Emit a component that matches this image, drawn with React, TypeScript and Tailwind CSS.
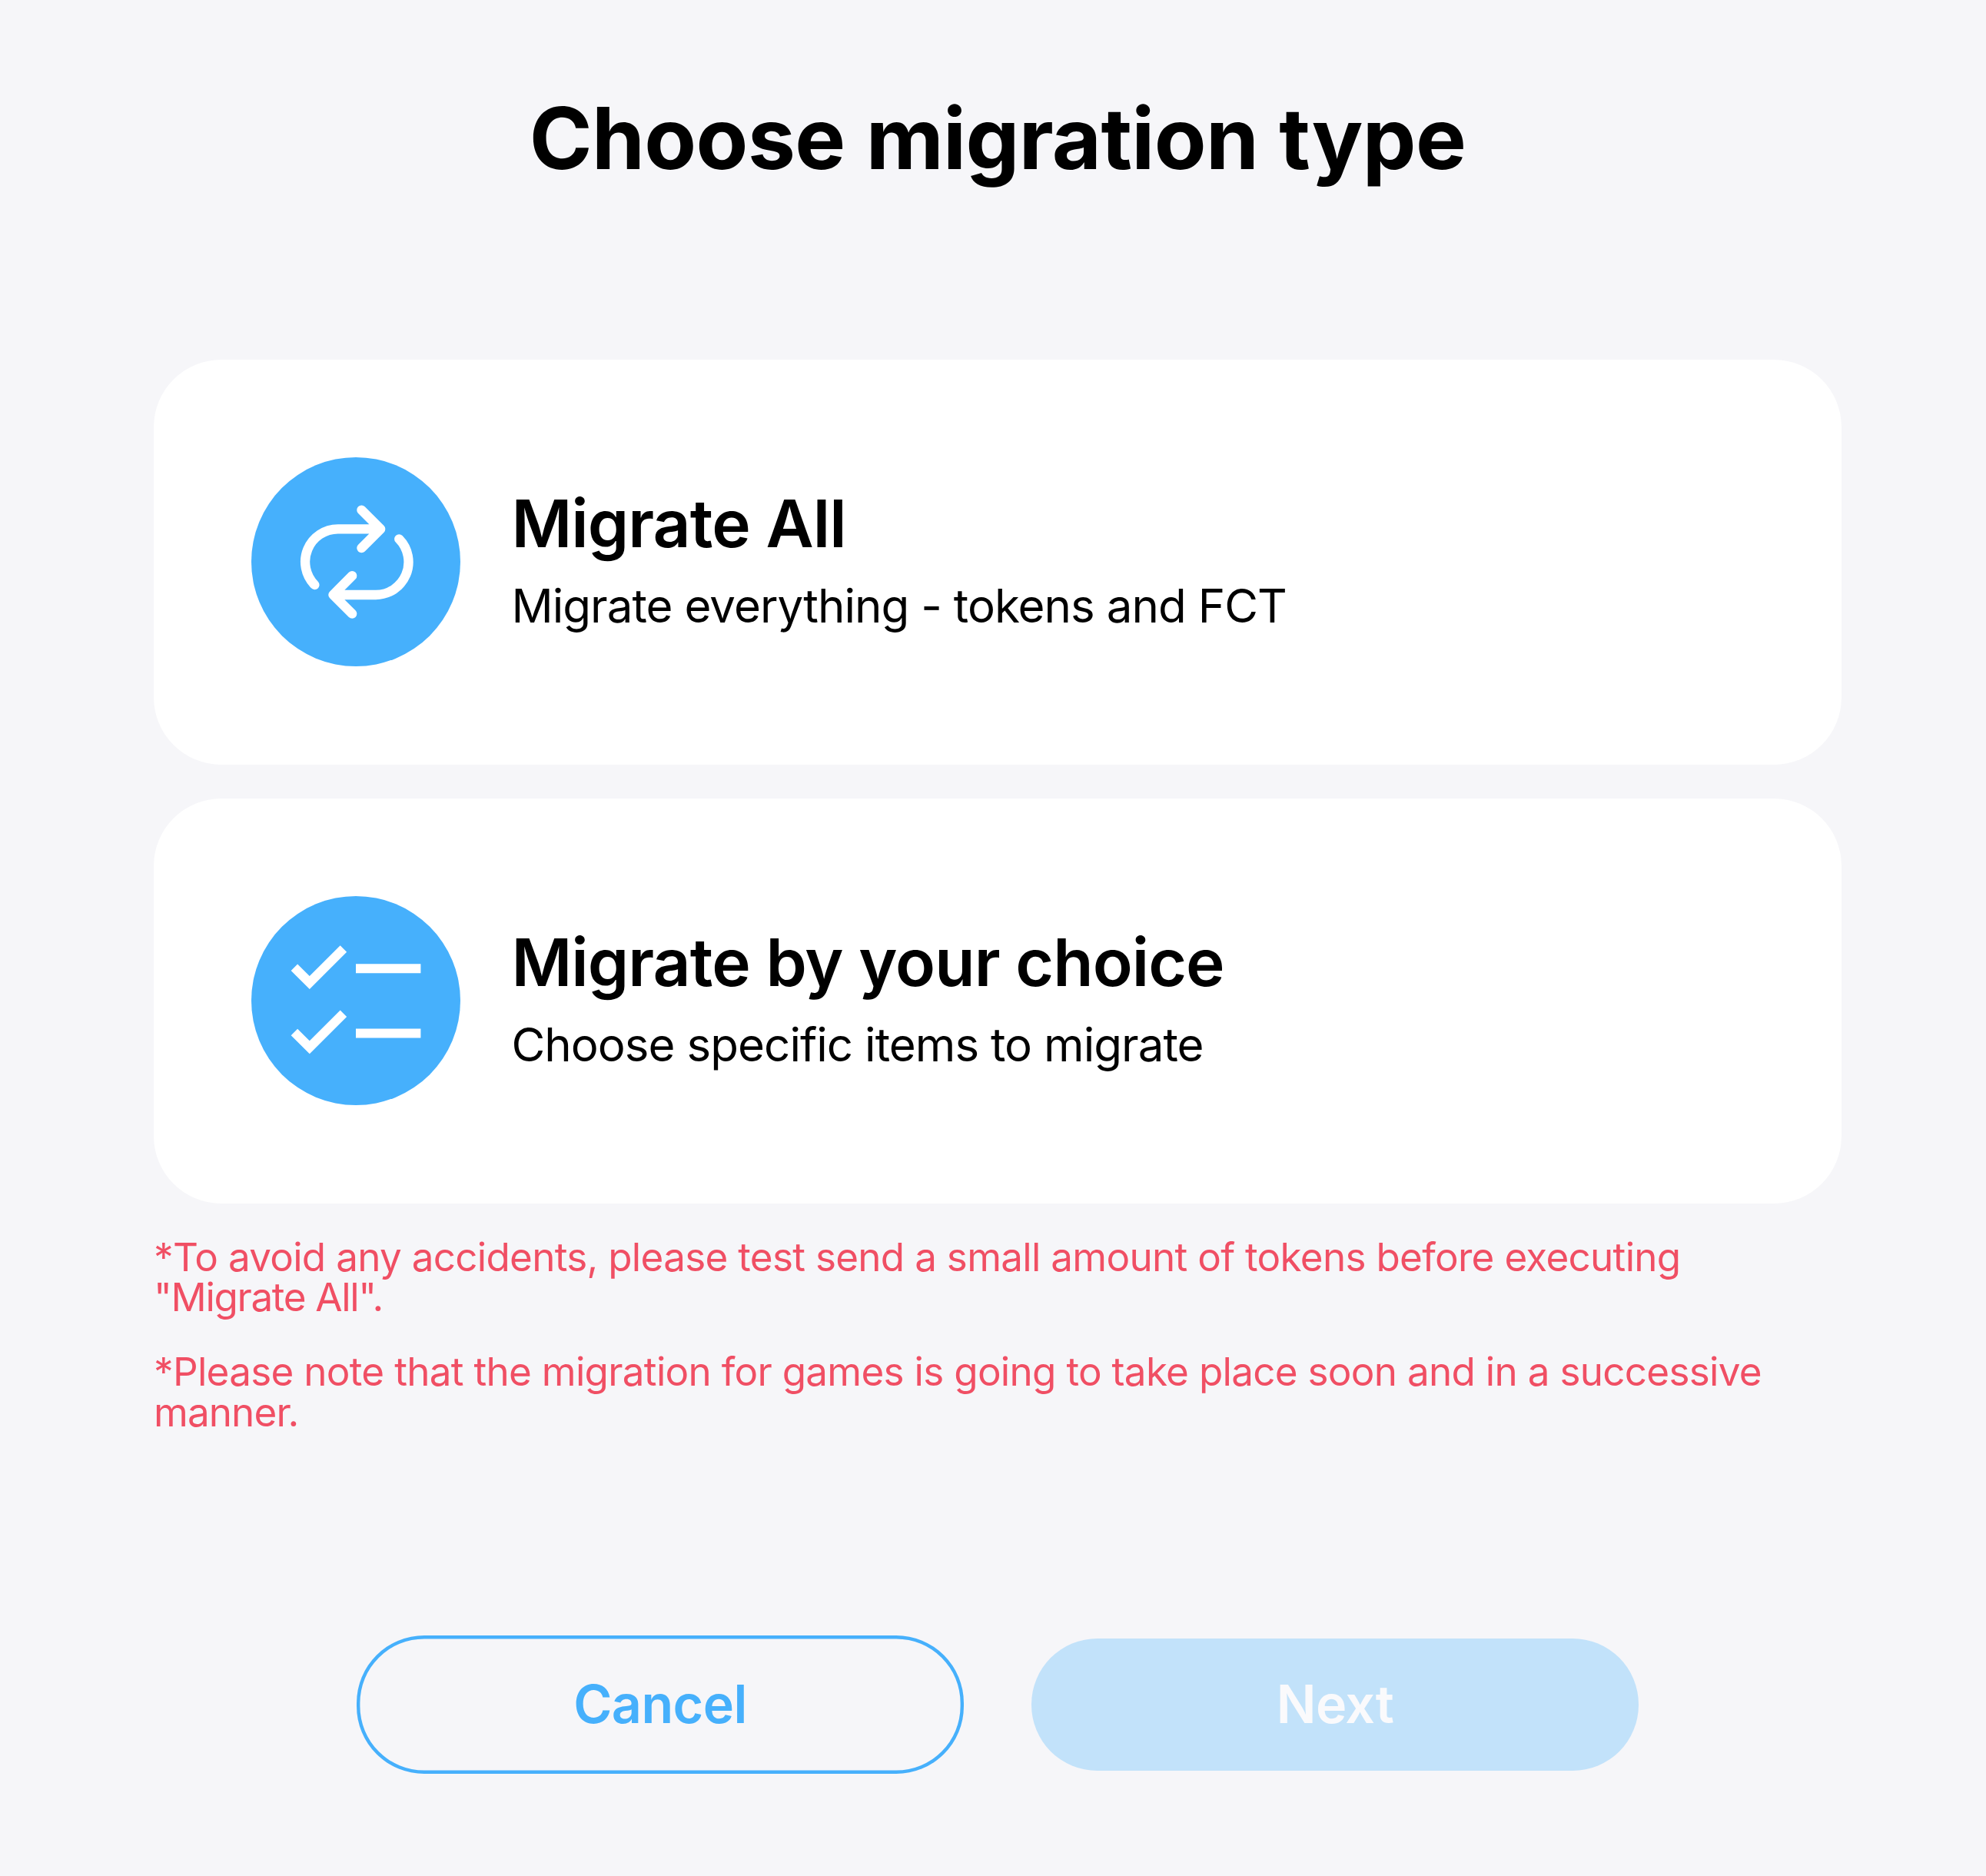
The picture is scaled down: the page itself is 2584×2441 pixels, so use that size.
import type { ReactNode } from "react";

function MigrateAllIcon() {
  return (
    <svg viewBox="0 0 272 272" className="size-[272px] shrink-0" fill="none">
      <circle cx="136" cy="136" r="136" fill="#46b0fc" />
      <g stroke="#fff" strokeWidth="12.3" strokeLinecap="round" strokeLinejoin="round">
        <path d="M143.4 68.7 168.2 93.3 143.4 118.1M168.2 93.3H112.7A42.7 42.7 0 0 0 82.4 166" />
        <path
          d="M143.4 68.7 168.2 93.3 143.4 118.1M168.2 93.3H112.7A42.7 42.7 0 0 0 82.4 166"
          transform="rotate(180 137.3 136.15)"
        />
      </g>
    </svg>
  );
}

function ChecklistIcon() {
  return (
    <svg viewBox="0 0 272 272" className="size-[272px] shrink-0" fill="none">
      <circle cx="136" cy="136" r="136" fill="#46b0fc" />
      <g stroke="#fff" strokeWidth="12">
        <path d="M55.9 92.8 75.8 112.5 119.9 68.5M136 94.3H220.4" />
        <path d="M55.9 177.1 75.8 196.8 119.9 152.8M136 178.6H220.4" />
      </g>
    </svg>
  );
}

function OptionCard({ icon, title, text }: { icon: ReactNode; title: string; text: string }) {
  return (
    <div className="flex h-[527px] items-center gap-[66px] rounded-[88px] bg-white px-[127.4px]">
      {icon}
      <div className="flex flex-col gap-[27px] pb-[1px]">
        <h2 className="text-[85.5px] leading-[88px] font-semibold tracking-[-0.92px] whitespace-nowrap">{title}</h2>
        <p className="text-[60px] leading-[72px] tracking-[-0.95px] whitespace-nowrap">{text}</p>
      </div>
    </div>
  );
}

export default function App() {
  return (
    <main className="h-[2441px] w-[2584px] overflow-hidden bg-[#f6f6f9] px-[200px] pt-[124px] font-['Inter',sans-serif] text-black">
      <div className="w-[2196px]">
        <h1 className="text-center text-[110.7px] leading-[112px] font-bold tracking-[-0.6px] [word-spacing:1.4px]">
          Choose migration type
        </h1>
        <div className="mt-[231.6px] flex flex-col gap-[44px]">
          <OptionCard
            icon={<MigrateAllIcon />}
            title="Migrate All"
            text="Migrate everything - tokens and FCT"
          />
          <OptionCard
            icon={<ChecklistIcon />}
            title="Migrate by your choice"
            text="Choose specific items to migrate"
          />
        </div>
        <div className="mt-[43.4px] flex flex-col gap-[45px] text-[51.2px] leading-[52.2px] tracking-[-0.72px] text-[#f04f64]">
          <p>
            *To avoid any accidents, please test send a small amount of tokens before executing
            <br />
            <span className="tracking-[-1.35px]">"Migrate All".</span>
          </p>
          <p>
            *Please note that the migration for games is going to take place soon and in a successive
            <br />
            <span className="tracking-[-0.9px]">manner.</span>
          </p>
        </div>
        <div className="mt-[265px] flex items-center justify-center gap-[88px] text-[68.2px] font-semibold tracking-[-0.55px]">
          <button className="flex h-[180px] w-[790px] items-center justify-center rounded-[88px] pb-[1px] text-[#46b0fc] shadow-[inset_0_0_0_4.4px_#46b0fc]">
            Cancel
          </button>
          <button className="flex h-[171.5px] w-[790px] items-center justify-center rounded-[85.7px] bg-[#c2e2fa] pb-[1px] text-[#fafafc]">
            Next
          </button>
        </div>
      </div>
    </main>
  );
}
